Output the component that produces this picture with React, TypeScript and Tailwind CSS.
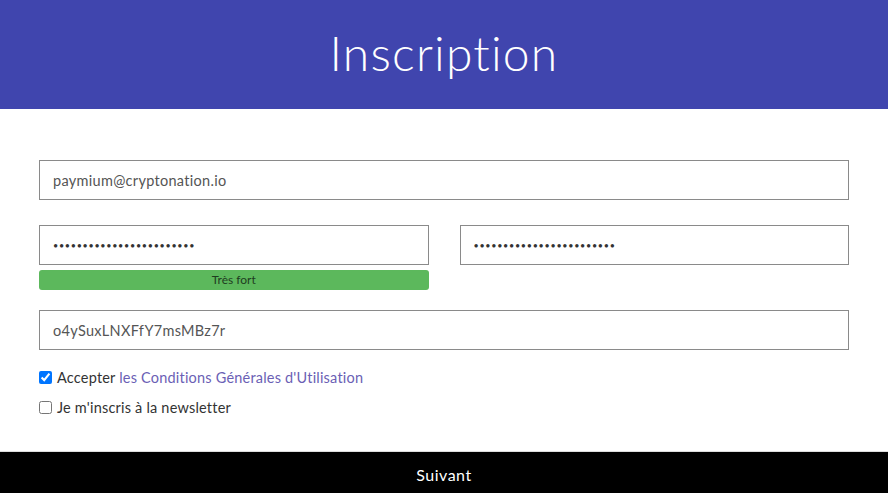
export default function App() {
  return (
    <div className="w-[888px] h-[493px] flex flex-col bg-white font-['Lato',sans-serif] overflow-hidden">
      <header className="h-[109px] bg-[#4045ae] flex items-center justify-center">
        <h1 className="text-white text-[48px] font-light tracking-wide leading-none pb-[4px]">Inscription</h1>
      </header>
      <main className="flex-1 px-[39px] pt-[51px]">
        <input
          className="w-full h-[40px] border border-[#8a8a8a] px-[13px] text-[14.5px] tracking-[0.3px] text-[#555] outline-none"
          defaultValue="paymium@cryptonation.io"
        />
        <div className="flex gap-[31px] mt-[25px]">
          <div className="flex-1 flex flex-col gap-[5px]">
            <input
              type="password"
              className="w-full h-[40px] border border-[#8a8a8a] px-[13px] text-[9px] tracking-[0.7px] text-[#333] outline-none"
              defaultValue="aaaaaaaaaaaaaaaaaaaaaaaa"
            />
            <div className="h-[20px] rounded-[3px] bg-[#5cb85c] flex items-center justify-center text-[12px] text-[#1f3d1f]">
              Très fort
            </div>
          </div>
          <div className="flex-1">
            <input
              type="password"
              className="w-full h-[40px] border border-[#8a8a8a] px-[13px] text-[9px] tracking-[0.7px] text-[#333] outline-none"
              defaultValue="aaaaaaaaaaaaaaaaaaaaaaaa"
            />
          </div>
        </div>
        <input
          className="w-full h-[40px] border border-[#8a8a8a] px-[13px] text-[14.5px] tracking-[0.3px] text-[#555] outline-none mt-[20px]"
          defaultValue="o4ySuxLNXFfY7msMBz7r"
        />
        <label className="flex items-center gap-[5px] mt-[17px] text-[14.5px] tracking-[0.2px] text-[#333]">
          <input type="checkbox" defaultChecked className="w-[13px] h-[13px] m-0 accent-[#0075ff]" />
          <span>
            Accepter <a className="text-[#6b5fb5]">les Conditions Générales d'Utilisation</a>
          </span>
        </label>
        <label className="flex items-center gap-[5px] mt-[8px] text-[14.5px] tracking-[0.2px] text-[#333]">
          <input type="checkbox" className="w-[13px] h-[13px] m-0" />
          <span>Je m'inscris à la newsletter</span>
        </label>
      </main>
      <footer className="h-[42px] bg-black flex items-center justify-center text-white text-[16px] tracking-[0.5px] border-t border-[#ddd] pt-[4px]">
        Suivant
      </footer>
    </div>
  );
}
